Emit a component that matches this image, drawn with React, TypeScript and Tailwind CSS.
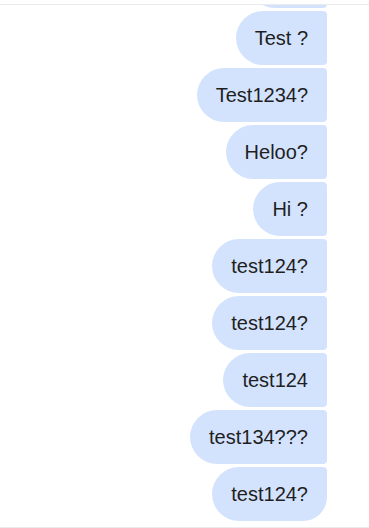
import React from "react";

const msgs = [
  "Test ?",
  "Test1234?",
  "Heloo?",
  "Hi ?",
  "test124?",
  "test124?",
  "test124",
  "test134???",
  "test124?",
];

export default function App() {
  return (
    <div
      className="w-[369px] h-[528px] bg-white pt-[4px] overflow-hidden"
      style={{ fontFamily: "'Liberation Sans', Arial, sans-serif" }}
    >
      <div className="h-[524px] border-t border-b border-[#ebebeb] overflow-hidden flex flex-col justify-end pr-[42px] pb-[6px]">
        <div className="flex flex-col items-end gap-[3px]">
          <div className="h-[54px] w-[79px] shrink-0 bg-[#d3e3fd] rounded-l-[27px] rounded-r-[4px]" />
          {msgs.map((m, i) => {
            const last = i === msgs.length - 1;
            return (
              <div
                key={i}
                className={
                  "h-[54px] shrink-0 flex items-center px-[19px] bg-[#d3e3fd] text-[#1f1f1f] text-[20px] leading-none rounded-l-[27px] rounded-tr-[4px] " +
                  (last ? "rounded-br-[24px]" : "rounded-br-[4px]")
                }
              >
                {m}
              </div>
            );
          })}
        </div>
      </div>
    </div>
  );
}
